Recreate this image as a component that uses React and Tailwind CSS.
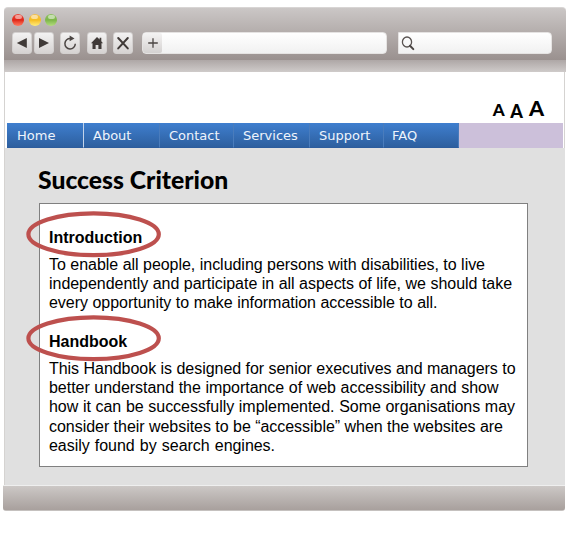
import React from "react";

const navItems = [
  { label: "Home", cls: "w-[77px] pl-[10px] border-[#c3d3ea]" },
  { label: "About", cls: "w-[76px] pl-[9px] border-[#4a7cbc]" },
  { label: "Contact", cls: "w-[74px] pl-[9px] border-[#4a7cbc]" },
  { label: "Services", cls: "w-[76px] pl-[9px] border-[#4a7cbc]" },
  { label: "Support", cls: "w-[74px] pl-[9px] border-[#4a7cbc]" },
  { label: "FAQ", cls: "w-[75px] pl-[8px] border-[#4a7cbc]" },
];

const introduction = [
  { text: "To enable all people, including persons with disabilities, to live", cls: "w-[436px]" },
  { text: "independently and participate in all aspects of life, we should take", cls: "w-[463px]" },
  { text: "every opportunity to make information accessible to all.", cls: "w-[388.5px]" },
];

const handbook = [
  { text: "This Handbook is designed for senior executives and managers to", cls: "w-[466px]" },
  { text: "better understand the importance of web accessibility and show", cls: "w-[449.5px]" },
  { text: "how it can be successfully implemented. Some organisations may", cls: "w-[466px]" },
  { text: "consider their websites to be “accessible” when the websites are", cls: "w-[454px]" },
  { text: "easily found by search engines.", cls: "w-[226px]" },
];

function Light({ cls }) {
  return (
    <div className={`relative h-[12px] w-[12px] rounded-full ${cls}`}>
      <div className="absolute left-[2.5px] top-[1px] h-[4px] w-[7px] rounded-full bg-white/50" />
    </div>
  );
}

function Key({ children, cls = "" }) {
  return (
    <div
      className={`flex h-[22px] w-[20px] items-center justify-center rounded-[3px] border border-[#d3d0cf] bg-linear-to-b from-[#f3f2f2] to-[#d6d3d2] ${cls}`}
    >
      {children}
    </div>
  );
}

function Paragraph({ lines, cls }) {
  return (
    <div className={`text-[16px] tracking-[-0.035px] ${cls}`}>
      {lines.map((l) => (
        <div key={l.text} className={`whitespace-nowrap text-justify [text-align-last:justify] ${l.cls}`}>
          {l.text}
        </div>
      ))}
    </div>
  );
}

function Heading({ children, cls = "" }) {
  return (
    <div className={`relative text-[16px] leading-[20px] font-bold ${cls}`}>
      {children}
      <svg className="absolute -left-[23px] -top-[17px]" width="136" height="48" viewBox="0 0 136 48">
        <ellipse cx="67.6" cy="23.3" rx="65.2" ry="20.9" fill="none" stroke="#bd504e" strokeWidth="4.2" />
      </svg>
    </div>
  );
}

export default function App() {
  return (
    <div className="h-[535px] w-[571px] overflow-hidden bg-white pt-[7px] pl-[4px] font-['Liberation_Sans',Arial,sans-serif] text-black">
      <div className="w-[562px]">
        <div className="h-[53px] rounded-t-[4px] border-t border-[#d8d5d4] bg-linear-to-b from-[#cbc7c6] to-[#9a918f]">
          <div className="flex h-[24px] gap-[4.5px] pl-[8px] pt-[6px]">
            <Light cls="bg-linear-to-b from-[#e94a3c] via-[#e02416] to-[#ff7a62]" />
            <Light cls="bg-linear-to-b from-[#f3c04a] via-[#f6bd1b] to-[#ffee78]" />
            <Light cls="bg-linear-to-b from-[#8fc163] via-[#7db648] to-[#b5dd80]" />
          </div>
          <div className="flex pl-[8px]">
            <Key>
              <svg width="12" height="12" viewBox="0 0 12 12"><path d="M10.8 1v10L.8 6z" fill="#403a38" /></svg>
            </Key>
            <Key cls="ml-[2px]">
              <svg width="12" height="12" viewBox="0 0 12 12"><path d="M1 1v10l10-5z" fill="#403a38" /></svg>
            </Key>
            <Key cls="ml-[6px]">
              <svg width="14" height="16" viewBox="0 0 14 16">
                <path d="M7.5 3.5A5.2 5.2 0 1 0 12.3 8.8" fill="none" stroke="#4b4543" strokeWidth="1.5" />
                <path d="M6.6.6 11.5 3.4 6.6 6.2z" fill="#4b4543" />
              </svg>
            </Key>
            <Key cls="ml-[7px]">
              <svg width="14" height="14" viewBox="0 0 14 14">
                <path d="M7 1 9.6 3.6V1.8h1.7v3.5L13 7.2h-1.5V13H8.4V9H5.6v4H2.5V7.2H1z" fill="#403a38" />
              </svg>
            </Key>
            <Key cls="ml-[6px]">
              <svg width="14" height="14" viewBox="0 0 14 14">
                <path d="M2.2 2 11.8 12.4M11.8 2 2.2 12.4" stroke="#403a38" strokeWidth="2" strokeLinecap="round" />
              </svg>
            </Key>
            <div className="ml-[9px] flex h-[22px] w-[245px] overflow-hidden rounded-[4px] border border-[#e5e3e2] bg-linear-to-b from-white to-[#f1f1f1]">
              <div className="flex w-[19px] items-center justify-center rounded-r-[2px] bg-linear-to-b from-[#f4f3f3] to-[#d5d2d1]">
                <svg width="10" height="10" viewBox="0 0 10 10"><path d="M5 .2v9.6M.2 5h9.6" stroke="#4b4543" strokeWidth="1.3" /></svg>
              </div>
            </div>
            <div className="ml-[11px] flex h-[22px] w-[154px] items-center rounded-r-[4px] border border-[#e5e3e2] bg-linear-to-b from-white to-[#f1f1f1] pl-[2px]">
              <svg width="14" height="15" viewBox="0 0 14 15">
                <ellipse cx="6" cy="6" rx="4.6" ry="5" fill="none" stroke="#5a5452" strokeWidth="1.3" />
                <path d="m9 9.8 3.3 3.3" stroke="#4b4543" strokeWidth="2" strokeLinecap="round" />
              </svg>
            </div>
          </div>
        </div>
        <div className="h-[12px] bg-linear-to-b from-[#aea7a6] to-[#cfcbca]" />
      </div>

      <div className="h-[76px] w-[561px] border-x border-[#d5d3d1] pl-[2px] pr-[1px]">
        <div className="flex h-[51px] items-end justify-end pr-[19px] font-[Lato,sans-serif] font-black leading-none">
          <span className="mb-[5px] text-[17px]">A</span>
          <span className="mb-[3px] ml-[5.5px] text-[18px]">A</span>
          <span className="mb-[4px] ml-[6px] text-[21.5px]">A</span>
        </div>
        <div className="flex h-[25px] bg-[#ccc0da] font-['DejaVu_Sans',sans-serif] text-[13px] leading-[25px] text-[#eef4fc]">
          {navItems.map((n) => (
            <div key={n.label} className={`border-r border-b border-b-[#2c5c9d] bg-linear-to-b from-[#3f7fcf] to-[#2d5f9f] ${n.cls}`}>
              {n.label}
            </div>
          ))}
        </div>
      </div>

      <div className="h-[337px] w-[561px] border-l border-[#d5d3d1] bg-[#e0e0e0]">
        <h1 className="ml-[33px] h-[55px] w-[200px] origin-left scale-x-[0.988] whitespace-nowrap pt-[16px] font-[Lato,sans-serif] text-[25px] font-black leading-[30px]">
          Success Criterion
        </h1>
        <div className="ml-[34px] h-[264px] w-[489px] border border-[#808080] bg-white pl-[9px] pt-[24px]">
          <Heading cls="mb-[7px]">Introduction</Heading>
          <Paragraph lines={introduction} cls="leading-[19.2px]" />
          <Heading cls="mb-[7px] mt-[19px]">Handbook</Heading>
          <Paragraph lines={handbook} cls="leading-[19.4px]" />
        </div>
      </div>
      <div className="-ml-px h-[26px] w-[562px] rounded-b-[3px] border-t border-b border-t-[#efefef] border-b-[#c5c1bf] bg-linear-to-b from-[#ccc8c6] to-[#a8a09d]" />
    </div>
  );
}
